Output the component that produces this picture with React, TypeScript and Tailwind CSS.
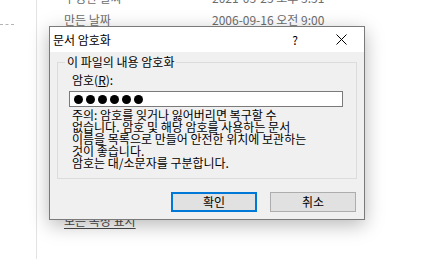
import React from 'react';

const font = { fontFamily: '"Noto Sans CJK KR", "Noto Sans", sans-serif' };

const App: React.FC = () => {
  return (
    <div className="relative w-[429px] h-[259px] overflow-hidden bg-white text-[12px]" style={font}>
      {/* Background: properties page */}
      <div className="flex h-full">
        <div className="w-[37px] shrink-0 border-r border-[#e3e3e3] pt-[24px]">
          <div className="w-[14px] border-t border-dashed border-[#b4b4b4]" />
        </div>
        <div className="flex flex-col pl-[27px] text-[#6d6d6d] -mt-[13px]">
          <div className="flex h-[22px] items-center leading-[22px]">
            <span className="w-[148px]">수정한 날짜</span>
            <span>2021-03-25 오후 3:51</span>
          </div>
          <div className="flex h-[22px] items-center leading-[22px]">
            <span className="w-[148px]">만든 날짜</span>
            <span>2006-09-16 오전 9:00</span>
          </div>
          <span className="mt-[182px] leading-[16px] text-[#4a4a4a] underline underline-offset-[2px]">
            모든 속성 표시
          </span>
        </div>
      </div>

      {/* Dialog */}
      <div className="absolute left-[49px] top-[26px] w-[316px] h-[194px] flex flex-col border border-[#7a7a7a] bg-[#f0f0f0] shadow-[0_5px_18px_rgba(0,0,0,0.28)] text-black">
        {/* Title bar */}
        <div className="h-[25px] shrink-0 bg-white flex items-center pl-[3px]">
          <span className="flex-1 leading-[16px] text-[12px]">문서 암호화</span>
          <span className="w-[12px] text-center text-[12px] leading-[16px] mr-[35px]">?</span>
          <svg className="mr-[17px]" width="11" height="11" viewBox="0 0 11 11">
            <path d="M0.5 0.5L10.5 10.5M10.5 0.5L0.5 10.5" stroke="#000" strokeWidth="1" fill="none" />
          </svg>
        </div>

        {/* Body */}
        <div className="flex-1 flex flex-col pl-[7px]">
          <div className="relative mt-[10px] w-[300px] h-[117px] border border-[#dcdcdc] pt-[9px] pl-[11px]">
            <span className="absolute -top-[9px] left-[7px] px-[2px] bg-[#f0f0f0] leading-[16px]">
              이 파일의 내용 암호화
            </span>
            <div className="ml-[3px] leading-[16px]">
              암호(<span className="underline underline-offset-[1px]">R</span>):
            </div>
            <div className="mt-[3px] w-[274px] h-[16px] bg-white border border-[#7a7a7a] flex items-center gap-[3px] pl-[4px]">
              {[0, 1, 2, 3, 4, 5].map((i) => (
                <span key={i} className="w-[9px] h-[9px] rounded-full bg-black" />
              ))}
            </div>
            <div className="mt-[2px] ml-[3px] leading-[12px]">
              <div>주의: 암호를 잊거나 잃어버리면 복구할 수</div>
              <div>없습니다. 암호 및 해당 암호를 사용하는 문서</div>
              <div>이름을 목록으로 만들어 안전한 위치에 보관하는</div>
              <div>것이 좋습니다.</div>
              <div>암호는 대/소문자를 구분합니다.</div>
            </div>
          </div>

          <div className="mt-[13px] flex gap-[13px] pl-[114px]">
            <button className="w-[86px] h-[20px] bg-[#e1e1e1] border-2 border-[#0078d7] text-[12px] leading-[14px]">
              확인
            </button>
            <button className="w-[86px] h-[20px] bg-[#e1e1e1] border border-[#adadad] text-[12px] leading-[14px]">
              취소
            </button>
          </div>
        </div>
      </div>
    </div>
  );
};

export default App;
